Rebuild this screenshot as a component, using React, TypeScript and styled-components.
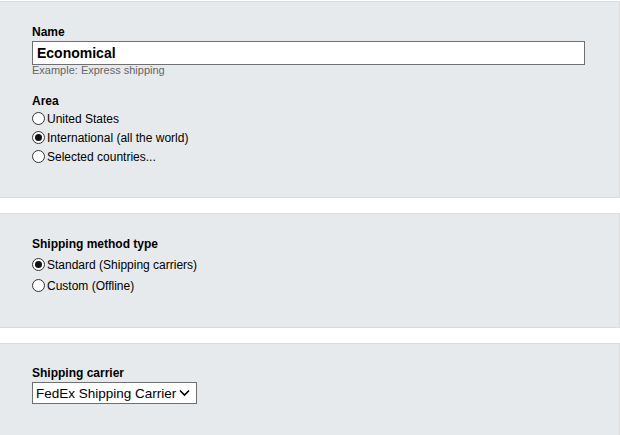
import React, { useState } from "react";
import styled, { createGlobalStyle } from "styled-components";

const GlobalStyle = createGlobalStyle`
  html, body {
    margin: 0;
    padding: 0;
    background: #ffffff;
  }
  body {
    font-family: "Liberation Sans", Arial, sans-serif;
    font-size: 12px;
    color: #000;
  }
`;

const Page = styled.div`
  display: flex;
  flex-direction: column;
  gap: 15px;
  width: 620px;
  padding-top: 1px;
`;

const Panel = styled.section<{ $top: number; $bottom: number }>`
  box-sizing: border-box;
  width: 620px;
  background: #e7eaed;
  border: 1px solid #dcdcdc;
  border-left: none;
  padding: ${(p) => p.$top}px 35px ${(p) => p.$bottom}px 32px;
  display: flex;
  flex-direction: column;
`;

const FieldLabel = styled.div`
  font-weight: 700;
  font-size: 12px;
  line-height: 14px;
`;

const TextInput = styled.input`
  box-sizing: border-box;
  margin-top: 2px;
  width: 553px;
  height: 24px;
  border: 1px solid #707070;
  border-radius: 0;
  padding: 0 4px;
  background: #fff;
  font-family: "Liberation Sans", Arial, sans-serif;
  font-size: 14px;
  font-weight: 700;
  color: #000;
  outline: none;
`;

const Hint = styled.div`
  font-size: 11px;
  line-height: 13px;
  color: #666;
  margin-top: -1px;
  margin-bottom: 17px;
`;

const RadioRow = styled.label<{ $h: number }>`
  display: flex;
  align-items: center;
  height: ${(p) => p.$h}px;
  font-size: 12px;
  cursor: pointer;
`;

const Radio = styled.input`
  appearance: none;
  box-sizing: border-box;
  width: 13px;
  height: 13px;
  margin: 0 2px 0 0;
  border: 1px solid #333;
  border-radius: 50%;
  background: #fff;
  display: grid;
  place-items: center;
  &:checked::after {
    content: "";
    width: 7px;
    height: 7px;
    border-radius: 50%;
    background: #111;
  }
`;

const RadioList = styled.div<{ $mt: number }>`
  display: flex;
  flex-direction: column;
  margin-top: ${(p) => p.$mt}px;
`;

const SelectWrap = styled.div`
  position: relative;
  width: 165px;
  margin-top: 2px;
`;

const Select = styled.select`
  appearance: none;
  box-sizing: border-box;
  width: 165px;
  height: 22px;
  border: 1px solid #707070;
  border-radius: 0;
  background: #fff;
  padding: 0 0 0 3px;
  font-family: "Liberation Sans", Arial, sans-serif;
  font-size: 13.5px;
  color: #000;
  outline: none;
`;

const Chevron = styled.svg`
  position: absolute;
  right: 7px;
  top: 7px;
  pointer-events: none;
`;

type Opt = { value: string; label: string };

function RadioGroup({
  name,
  options,
  value,
  onChange,
  rowHeight,
  mt,
}: {
  name: string;
  options: Opt[];
  value: string;
  onChange: (v: string) => void;
  rowHeight: number;
  mt: number;
}) {
  return (
    <RadioList $mt={mt}>
      {options.map((o) => (
        <RadioRow key={o.value} $h={rowHeight}>
          <Radio
            type="radio"
            name={name}
            checked={value === o.value}
            onChange={() => onChange(o.value)}
          />
          {o.label}
        </RadioRow>
      ))}
    </RadioList>
  );
}

export default function App() {
  const [name, setName] = useState("Economical");
  const [area, setArea] = useState("intl");
  const [type, setType] = useState("standard");
  const [carrier, setCarrier] = useState("fedex");

  return (
    <>
      <GlobalStyle />
      <Page>
        <Panel $top={23} $bottom={31}>
          <FieldLabel>Name</FieldLabel>
          <TextInput value={name} onChange={(e) => setName(e.target.value)} />
          <Hint>Example: Express shipping</Hint>
          <FieldLabel>Area</FieldLabel>
          <RadioGroup
            name="area"
            value={area}
            onChange={setArea}
            rowHeight={19}
            mt={1}
            options={[
              { value: "us", label: "United States" },
              { value: "intl", label: "International (all the world)" },
              { value: "sel", label: "Selected countries..." },
            ]}
          />
        </Panel>

        <Panel $top={23} $bottom={31}>
          <FieldLabel>Shipping method type</FieldLabel>
          <RadioGroup
            name="type"
            value={type}
            onChange={setType}
            rowHeight={21}
            mt={3}
            options={[
              { value: "standard", label: "Standard (Shipping carriers)" },
              { value: "custom", label: "Custom (Offline)" },
            ]}
          />
        </Panel>

        <Panel $top={22} $bottom={31}>
          <FieldLabel>Shipping carrier</FieldLabel>
          <SelectWrap>
            <Select value={carrier} onChange={(e) => setCarrier(e.target.value)}>
              <option value="fedex">FedEx Shipping Carrier</option>
              <option value="ups">UPS Shipping Carrier</option>
            </Select>
            <Chevron width="11" height="8" viewBox="0 0 11 8">
              <path d="M1 1.5 L5.5 6 L10 1.5" fill="none" stroke="#000" strokeWidth="1.6" />
            </Chevron>
          </SelectWrap>
        </Panel>
      </Page>
    </>
  );
}
